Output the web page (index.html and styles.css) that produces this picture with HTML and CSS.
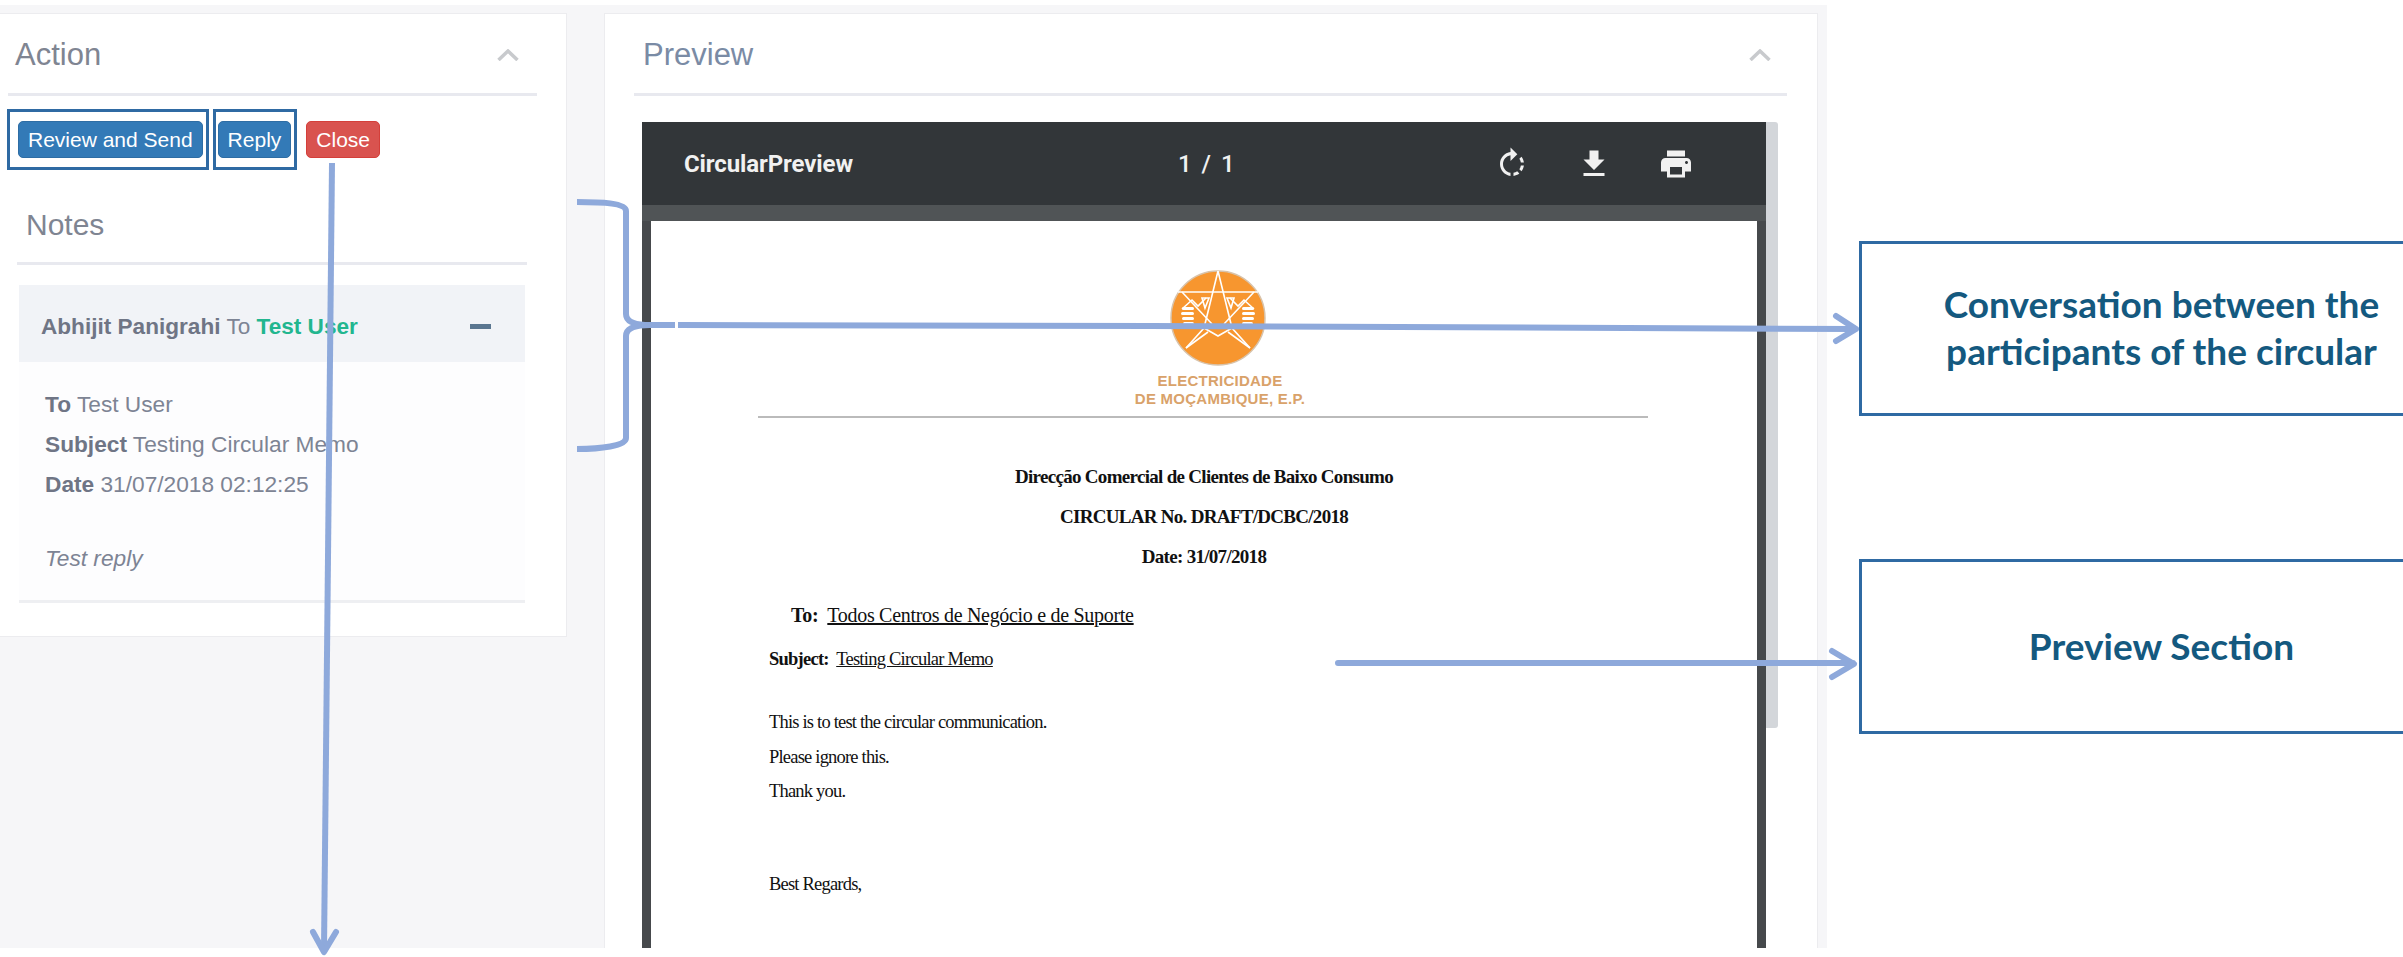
FILE: index.html
```html
<!DOCTYPE html>
<html lang="en">
<head>
    <meta charset="UTF-8">
    <title>Circular Preview</title>
    <link rel="stylesheet" href="styles.css">
</head>
<body>
    <div class="app">
        <section class="card action-card">
            <div class="card-head">
                <h2>Action</h2>
                <svg class="chevron" viewBox="0 0 22 12"><path d="M1.5 11L11 2l9.5 9"/></svg>
            </div>
            <div class="actions">
                <div class="outlined first"><button class="btn btn-blue wide">Review and Send</button></div>
                <div class="outlined second"><button class="btn btn-blue">Reply</button></div>
                <button class="btn btn-red">Close</button>
            </div>
            <div class="notes">
                <h2 class="notes-title">Notes</h2>
                <div class="note-head">
                    <span><b>Abhijit Panigrahi</b> To <b class="green">Test User</b></span>
                    <span class="minus"></span>
                </div>
                <div class="note-body">
                    <p><b>To</b> Test User</p>
                    <p><b>Subject</b> Testing Circular Memo</p>
                    <p><b>Date</b> 31/07/2018 02:12:25</p>
                    <p class="reply"><i>Test reply</i></p>
                </div>
            </div>
        </section>

        <section class="card preview-card">
            <div class="card-head">
                <h2 class="blue-title">Preview</h2>
                <svg class="chevron" viewBox="0 0 22 12"><path d="M1.5 11L11 2l9.5 9"/></svg>
            </div>
            <div class="viewer-wrap">
                <div class="viewer">
                    <div class="toolbar">
                        <span class="doc-name">CircularPreview</span>
                        <span class="pages">1 / 1</span>
                        <div class="tools">
                            <svg viewBox="0 0 24 24"><path d="M15.55 5.55L11 1v3.07C7.06 4.56 4 7.92 4 12s3.05 7.44 7 7.93v-2.02c-2.84-.48-5-2.94-5-5.91s2.16-5.43 5-5.91V10l4.55-4.45zM19.93 11c-.17-1.39-.72-2.73-1.62-3.89l-1.42 1.42c.54.75.88 1.6 1.02 2.47h2.02zM13 17.9v2.02c1.39-.17 2.74-.71 3.9-1.61l-1.44-1.44c-.75.54-1.59.89-2.46 1.03zm3.89-2.42l1.42 1.41c.9-1.16 1.45-2.5 1.62-3.89h-2.02c-.14.87-.48 1.72-1.02 2.48z"/></svg>
                            <svg viewBox="0 0 24 24"><path d="M19 9h-4V3H9v6H5l7 7 7-7zM5 18v2h14v-2H5z"/></svg>
                            <svg viewBox="0 0 24 24"><path d="M19 8H5c-1.66 0-3 1.34-3 3v6h4v4h12v-4h4v-6c0-1.66-1.34-3-3-3zm-3 11H8v-5h8v5zm3-7c-.55 0-1-.45-1-1s.45-1 1-1 1 .45 1 1-.45 1-1 1zm-1-9H6v4h12V3z"/></svg>
                        </div>
                    </div>
                    <div class="toolbar-shade"></div>
                    <div class="sheet-area">
                        <div class="sheet">
                            <div class="logo">
                                <svg class="logo-mark" viewBox="-50 -50 100 100">
                                    <circle r="47" fill="#f7962f" stroke="#d8c3ab" stroke-width="1.5"/>
                                    <g fill="none" stroke="#fff" stroke-width="1.6">
                                        <path d="M0 -47L-14 10L-32 30M0 -47L14 10L32 30"/>
                                        <path d="M-40 -26H40"/>
                                        <path d="M-36 -26L-6 6M36 -26L6 6"/>
                                        <path d="M-14 10L0 18L14 10M-32 30L-10 14M32 30L10 14"/>
                                        <path d="M-36 -9L-26 -18L-20 -12L-12 -20M36 -9L26 -18L20 -12L12 -20"/>
                                        <path d="M-16 -20L-9 -20L-13 -10ZM16 -20L9 -20L13 -10Z"/>
                                    </g>
                                    <g fill="#fff">
                                        <rect x="-36" y="-11" width="12" height="3" rx="1.5"/>
                                        <rect x="-37" y="-6" width="13" height="3" rx="1.5"/>
                                        <rect x="-36" y="-1" width="12" height="3" rx="1.5"/>
                                        <rect x="-35" y="4" width="11" height="3" rx="1.5"/>
                                        <rect x="24" y="-11" width="12" height="3" rx="1.5"/>
                                        <rect x="24" y="-6" width="13" height="3" rx="1.5"/>
                                        <rect x="24" y="-1" width="12" height="3" rx="1.5"/>
                                        <rect x="24" y="4" width="11" height="3" rx="1.5"/>
                                    </g>
                                </svg>
                                <div class="logo-text">ELECTRICIDADE<br>DE MOÇAMBIQUE, E.P.</div>
                            </div>
                            <div class="sheet-rule"></div>
                            <div class="letter-head">
                                <p>Direcção Comercial de Clientes de Baixo Consumo</p>
                                <p>CIRCULAR No. DRAFT/DCBC/2018</p>
                                <p>Date: 31/07/2018</p>
                            </div>
                            <p class="to-line"><b>To:</b>&nbsp; <u>Todos Centros de Negócio e de Suporte</u></p>
                            <p class="subject-line"><b>Subject:</b>&nbsp; <u>Testing Circular Memo</u></p>
                            <div class="letter-body">
                                <p>This is to test the circular communication.</p>
                                <p>Please ignore this.</p>
                                <p>Thank you.</p>
                                <p class="regards">Best Regards,</p>
                            </div>
                        </div>
                    </div>
                </div>
                <div class="scrollbar"><div class="thumb"></div></div>
            </div>
        </section>
    </div>

    <aside class="callouts">
        <div class="callout">Conversation between the<br>participants of the circular</div>
        <div class="callout">Preview Section</div>
    </aside>

    <svg class="arrows" viewBox="0 0 2403 957">
        <g fill="none" stroke="#8ea9db" stroke-width="6" stroke-linecap="round" stroke-linejoin="round">
            <path stroke-linecap="butt" d="M577 202C600 202 626 203 626 211V314C626 322 636 325 650 325H675"/>
            <path stroke-linecap="butt" d="M650 325C636 325 626 328 626 336V438C626 446 600 449 577 449"/>
            <path stroke-linecap="butt" d="M678 325L1150 326L1855 329"/>
            <path d="M1836 316L1856 329L1836 341"/>
            <path d="M1338 663H1853M1832 651L1854 664L1832 677"/>
            <path stroke-linecap="butt" d="M332 163L324 950"/>
            <path d="M313 932L324 952L336 932"/>
        </g>
    </svg>
</body>
</html>
```

FILE: styles.css
```css
* {
    box-sizing: border-box;
}
html, body {
    height: 957px;
    overflow: hidden;
}
body {
    display: flex;
    margin: 0;
    background-color: #fff;
    font-family: "Liberation Sans", Arial, sans-serif;
    color: #7d8494;
}
h2, p {
    margin: 0;
    font-weight: normal;
}

.app {
    display: flex;
    align-items: flex-start;
    flex: none;
    gap: 37px;
    width: 1827px;
    height: 943px;
    margin-top: 5px;
    padding-top: 8px;
    background-color: #f6f6f8;
}
.card {
    flex: none;
    background-color: #fff;
    border: 1px solid #ececef;
}
.action-card {
    width: 567px;
    height: 624px;
    border-left: none;
}
.preview-card {
    width: 1214px;
    height: 935px;
    border-bottom: none;
    padding: 0 30px 0 29px;
}
.card-head {
    display: flex;
    justify-content: space-between;
    align-items: center;
    height: 82px;
    padding-top: 23px;
    padding-right: 18px;
    padding-bottom: 20px;
    border-bottom: 3px solid #e8e9ef;
}
.action-card .card-head {
    margin: 0 29px 0 8px;
    padding-left: 7px;
}
.preview-card .card-head {
    padding-left: 9px;
    padding-right: 16px;
}
.card-head h2, .notes-title {
    font-size: 30px;
    line-height: 36px;
    color: #7f8592;
}
.card-head h2 {
    font-size: 31px;
}
.card-head h2.blue-title {
    color: #7a8ba5;
}
.chevron {
    width: 22px;
    height: 12px;
    fill: none;
    stroke: #c8cacd;
    stroke-width: 3.5;
}

.actions {
    display: flex;
    align-items: center;
    margin: 13px 0 0 7px;
}
.outlined {
    display: flex;
    align-items: center;
    height: 61px;
    border: 3px solid #2f6aa3;
}
.outlined.first {
    padding: 0 3px 0 8px;
}
.outlined.second {
    margin-left: 4px;
    padding: 0 3px 0 2px;
}
.btn {
    height: 37px;
    padding: 0 9px;
    border: 1px solid transparent;
    border-radius: 5px;
    font-family: inherit;
    font-size: 21px;
    color: #fff;
}
.btn-blue {
    background-color: #337ab7;
    border-color: #2e6da4;
}
.btn-red {
    margin-left: 9px;
    background-color: #d9534f;
    border-color: #d43f3a;
}

.notes {
    margin: 0 39px 0 17px;
}
.notes-title {
    padding: 37px 0 19px 9px;
    border-bottom: 3px solid #e8e9ef;
}
.note-head {
    display: flex;
    justify-content: space-between;
    align-items: center;
    height: 77px;
    margin: 20px 2px 0;
    padding: 6px 34px 0 22px;
    background-color: #f1f3f7;
    font-size: 22.6px;
}
.note-head b {
    color: #6f7585;
}
.note-head b.green {
    color: #22b68f;
}
.minus {
    width: 21px;
    height: 5px;
    background-color: #5a7690;
}
.note-body {
    margin: 0 2px;
    padding: 22px 0 22px 26px;
    background-color: #fdfdfe;
    border-bottom: 3px solid #eeeff2;
    font-size: 22.7px;
    line-height: 40px;
}
.note-body b {
    color: #6f7585;
}
.note-body .reply {
    margin-top: 34px;
}

.viewer-wrap {
    display: flex;
    align-items: flex-start;
    margin: 26px 0 0 8px;
}
.viewer {
    width: 1124px;
    height: 826px;
    background-color: #46494c;
    overflow: hidden;
}
.toolbar {
    display: flex;
    align-items: center;
    height: 83px;
    padding-left: 42px;
    background-color: #323639;
    color: #f1f1f1;
    font-family: Roboto, sans-serif;
}
.doc-name {
    width: 494px;
    font-size: 24px;
    font-weight: 700;
    letter-spacing: -0.1px;
}
.pages {
    width: 316px;
    font-size: 24px;
    font-weight: 500;
    word-spacing: 4px;
}
.tools {
    display: flex;
    gap: 46px;
}
.tools svg {
    width: 36px;
    height: 36px;
    fill: #f1f1f1;
}
.toolbar-shade {
    height: 16px;
    background-color: #505456;
}
.sheet-area {
    padding: 0 9px;
}
.sheet {
    height: 727px;
    padding-top: 47px;
    background-color: #fff;
    font-family: "Liberation Serif", "Times New Roman", serif;
    color: #111;
    overflow: hidden;
}
.scrollbar {
    width: 12px;
}
.thumb {
    height: 606px;
    background-color: #d3d6da;
    border-radius: 0 3px 3px 0;
}

.logo {
    display: flex;
    flex-direction: column;
    align-items: center;
    padding-left: 27px;
}
.logo-mark {
    width: 100px;
    height: 100px;
}
.logo-text {
    margin: 4px 0 0 5px;
    font-family: "Liberation Sans", sans-serif;
    font-size: 15px;
    font-weight: bold;
    line-height: 18px;
    letter-spacing: 0.25px;
    text-align: center;
    color: #d9a26a;
}
.sheet-rule {
    height: 2px;
    margin: 8px 109px 0 107px;
    background-color: #bbb;
}
.letter-head {
    margin-top: 39px;
    font-size: 19px;
    letter-spacing: -0.7px;
    text-align: center;
}
.letter-head p {
    height: 40px;
    font-weight: bold;
    line-height: 40px;
}
.to-line {
    margin-top: 16px;
    padding-left: 140px;
    font-size: 20px;
    letter-spacing: -0.3px;
    line-height: 44px;
}
.subject-line {
    padding-left: 118px;
    font-size: 18.5px;
    letter-spacing: -0.75px;
    line-height: 44px;
}
.letter-body {
    margin-top: 24px;
    padding-left: 118px;
    font-size: 18.5px;
    letter-spacing: -0.8px;
    line-height: 34.5px;
}
.letter-body .regards {
    margin-top: 58px;
}

.callouts {
    display: flex;
    flex-direction: column;
    gap: 143px;
    flex: 1;
    margin-left: 32px;
    padding-top: 241px;
}
.callout {
    display: flex;
    align-items: center;
    justify-content: center;
    height: 175px;
    padding: 0 0 3px 58px;
    border: 3px solid #2f6aa3;
    border-right: none;
    font-family: Lato, "Open Sans", sans-serif;
    font-size: 37px;
    font-weight: bold;
    line-height: 47px;
    text-align: center;
    color: #14597f;
}

.arrows {
    position: absolute;
    left: 0;
    top: 0;
    width: 2403px;
    height: 957px;
    pointer-events: none;
}
```
